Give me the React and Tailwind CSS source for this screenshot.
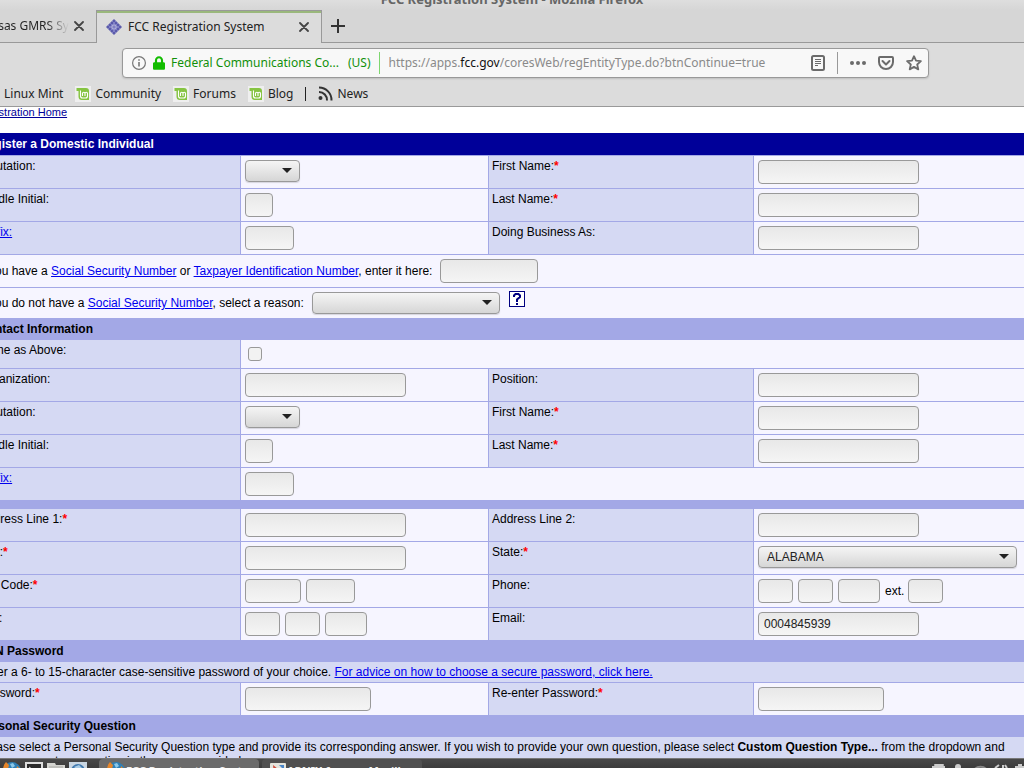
import React, { useState } from "react";
import { FaLock } from "react-icons/fa";

const bookmarks = ["Linux Mint", "Community", "Forums", "Blog"];

const FccIcon = () => (
  <svg width="16" height="16" viewBox="0 0 16 16" aria-hidden="true">
    <path d="M8 0 16 8 8 16 0 8Z" fill="#5b5bab" />
    <path
      d="M4 4l8 8M6 2l8 8M2 6l8 8M12 4l-8 8M10 2 2 10M14 6l-8 8"
      stroke="#9a9ad6"
      strokeWidth="0.6"
    />
    <path d="M8 5.500 10.500 8 8 10.500 5.500 8Z" fill="none" stroke="#dcdcf2" />
  </svg>
);

const MintIcon = () => (
  <svg width="16" height="16" viewBox="0 0 16 16" aria-hidden="true">
    <rect width="16" height="16" fill="#efefef" />
    <path
      d="M1.500 2h9.500a3 3 0 0 1 3 3v9H7a3.500 3.500 0 0 1-3.500-3.500V5h-2Z"
      fill="#86c442"
    />
    <path
      d="M5.500 4.500v5.500a2 2 0 0 0 2 2h3a2 2 0 0 0 2-2V7.500a1.250 1.250 0 0 0-2.500 0V10M10 7.500a1.250 1.250 0 0 0-2.500 0V10"
      fill="none"
      stroke="#fff"
      strokeWidth="1.100"
    />
  </svg>
);

const CloseIcon = () => (
  <svg width="10" height="10" viewBox="0 0 10 10" aria-hidden="true">
    <path d="M1 1l8 8M9 1l-8 8" stroke="#444" strokeWidth="1.800" strokeLinecap="round" />
  </svg>
);

const FirefoxIcon = () => (
  <svg width="18" height="18" viewBox="0 0 18 18" className="shrink-0" aria-hidden="true">
    <circle cx="9" cy="9" r="9" fill="#2f7fb5" />
    <path d="M0 9C0 5 1 2 3 0l3 3-1 4 3 4 5-1 1-6 3 3c1 6-2 11-8 11S0 14 0 9Z" fill="#e5862b" />
    <path d="M7 2l3-1 2 3-3 2Z" fill="#8cc8e8" />
  </svg>
);

const Field = ({ id, label, width, type = "text", defaultValue = "" }) => (
  <input
    id={id}
    type={type}
    aria-label={label}
    defaultValue={defaultValue}
    className={`${width} h-6 shrink-0 rounded border border-[#999] bg-linear-to-b from-[#e8e8e8] to-[#f5f5f5] px-[5px] text-xs text-[#222] outline-none focus:border-[#86be43]`}
  />
);

const Select = ({ id, label, width, options = [""] }) => (
  <span className={`${width} relative inline-flex h-[22px] shrink-0`}>
    <select
      id={id}
      aria-label={label}
      className="w-full appearance-none rounded border border-[#999] bg-linear-to-b from-[#f5f5f5] to-[#d6d6d6] pr-6 pl-2 text-xs text-[#222] shadow-[0_1px_1px_#0002] outline-none"
    >
      {options.map((option) => (
        <option key={option}>{option}</option>
      ))}
    </select>
    <svg
      className="pointer-events-none absolute top-2 right-2"
      width="10"
      height="5"
      viewBox="0 0 10 5"
      aria-hidden="true"
    >
      <path d="M0 0h10L5 5Z" fill="#222" />
    </svg>
  </span>
);

const LabelCell = ({ htmlFor, required, link, children }) => (
  <div className="border-r border-[#a3a8e6] bg-[#d5d9f3] p-[3px] leading-[15px]">
    <label htmlFor={htmlFor}>
      {link ? (
        <a href="#suffix" className="text-[#0000ee] underline">
          {children}
        </a>
      ) : (
        children
      )}
      {required && <b className="text-[#ff0000]">*</b>}
    </label>
  </div>
);

// One form line: a label and its fields, then optionally a second pair
const Row = ({ left, right }) => (
  <div className="grid grid-cols-[265px_248px_265px_1fr] border-b border-[#a3a8e6] bg-[#f6f5ff]">
    <LabelCell htmlFor={left.id} required={left.required} link={left.link}>
      {left.label}
    </LabelCell>
    <div
      className={
        right
          ? "flex items-start gap-[5px] border-r border-[#a3a8e6] p-1"
          : "col-span-3 flex items-start gap-[5px] p-1"
      }
    >
      {left.fields}
    </div>
    {right && (
      <>
        <LabelCell htmlFor={right.id} required={right.required}>
          {right.label}
        </LabelCell>
        <div className="flex items-start gap-[5px] p-1">{right.fields}</div>
      </>
    )}
  </div>
);

const Band = ({ children }) => (
  <h2 className="bg-[#a3a8e6] p-[3px] leading-[15px] font-bold">{children}</h2>
);

const TextLink = ({ href, children }) => (
  <a href={href} className="text-[#0000ee] underline">
    {children}
  </a>
);

const BrowserChrome = () => (
  <header className="shrink-0 bg-[#dcdcdc] font-['Noto_Sans',sans-serif] text-xs text-[#222]">
    {/* Window title */}
    <div className="flex h-[10px] items-end justify-center overflow-hidden bg-linear-to-b from-[#dedede] to-[#d6d6d6] text-[13px] leading-[22px] font-bold whitespace-nowrap text-[#666]">
      FCC Registration System - Mozilla Firefox
    </div>

    {/* Tabs */}
    <div className="flex h-[33px] bg-[#d6d6d6]">
      <div className="flex w-24 shrink-0 items-center justify-end gap-[5px] overflow-hidden border-b border-[#999] pr-3">
        <span className="shrink-0 bg-linear-to-r from-[#222] from-75% to-transparent bg-clip-text whitespace-nowrap text-transparent">
          Kansas GMRS Sy
        </span>
        <button type="button" aria-label="Close tab">
          <CloseIcon />
        </button>
      </div>
      <div className="w-[226px] shrink-0 border-x border-t border-[#999] bg-[#dcdcdc]">
        <div className="flex h-8 items-center border-t-2 border-[#9ab87c] pr-3 pb-0.5 pl-[9px]">
          <FccIcon />
          <span className="ml-1.5 flex-1">FCC Registration System</span>
          <button type="button" aria-label="Close tab">
            <CloseIcon />
          </button>
        </div>
      </div>
      <div className="flex flex-1 items-center border-b border-[#999] pl-[9px]">
        <button type="button" aria-label="New tab">
          <svg width="14" height="14" viewBox="0 0 14 14" aria-hidden="true">
            <path d="M7 0v14M0 7h14" stroke="#333" strokeWidth="2" />
          </svg>
        </button>
      </div>
    </div>

    {/* Address bar */}
    <div className="pt-[5px] pr-[95px] pl-[122px]">
      <div className="flex h-[30px] items-center rounded border border-[#999] bg-[#f8f8f8] pr-1.5 pl-[9px] shadow-[0_1px_2px_#0002]">
        <button type="button" aria-label="Site information">
          <svg width="14" height="14" viewBox="0 0 14 14" fill="none" aria-hidden="true">
            <circle cx="7" cy="7" r="6.400" stroke="#777" strokeWidth="1.200" />
            <path d="M7 6v4.500M7 3.200v1.600" stroke="#777" strokeWidth="1.600" />
          </svg>
        </button>
        <FaLock className="ml-[7px] h-[14px] w-3 text-[#12bc00]" />
        <span className="ml-1.5 shrink-0 whitespace-nowrap text-[#12900a]">
          Federal Communications Co...
        </span>
        <span className="ml-[9px] shrink-0 text-[#12900a]">(US)</span>
        <span className="ml-2 h-[22px] w-px bg-[#7ed66f]" />
        <span className="ml-[9px] flex-1 truncate text-[#8a8a8a]">
          https://apps.<span className="text-[#111]">fcc.gov</span>
          /coresWeb/regEntityType.do?btnContinue=true
        </span>
        <button type="button" aria-label="Reader view">
          <svg width="14" height="16" viewBox="0 0 14 16" fill="none" stroke="#6b6b6b" aria-hidden="true">
            <rect x="1" y="1" width="12" height="14" rx="1.500" strokeWidth="2" />
            <path d="M4 4.500h6M4 6.500h6M4 8.500h6M4 10.500h3" />
          </svg>
        </button>
        <span className="ml-3 h-[22px] w-px bg-[#999]" />
        <button type="button" aria-label="Page actions" className="ml-3">
          <svg width="16" height="16" viewBox="0 0 16 16" fill="#6b6b6b" aria-hidden="true">
            <circle cx="2" cy="8" r="2" />
            <circle cx="8" cy="8" r="2" />
            <circle cx="14" cy="8" r="2" />
          </svg>
        </button>
        <button type="button" aria-label="Save to Pocket" className="ml-3">
          <svg width="16" height="16" viewBox="0 0 16 16" fill="none" stroke="#6b6b6b" strokeWidth="2" aria-hidden="true">
            <path d="M2 2h12a1 1 0 0 1 1 1v4a7 7 0 0 1-14 0V3a1 1 0 0 1 1-1Z" />
            <path d="M4.500 6 8 9.500 11.500 6" strokeLinecap="round" strokeLinejoin="round" />
          </svg>
        </button>
        <button type="button" aria-label="Bookmark this page" className="ml-3">
          <svg width="16" height="16" viewBox="0 0 16 16" fill="none" stroke="#6b6b6b" strokeWidth="1.800" strokeLinejoin="round" aria-hidden="true">
            <path d="M8 1.200l2 4.500 4.900.5-3.700 3.300 1.100 4.900L8 11.900l-4.300 2.500 1.100-4.900L1.100 6.200 6 5.700Z" />
          </svg>
        </button>
      </div>
    </div>

    {/* Bookmarks */}
    <nav className="-ml-4 flex h-[29px] items-center gap-3 border-b border-[#999] pt-[3px]">
      {bookmarks.map((name) => (
        <a key={name} href="#bookmark" className="flex items-center gap-1">
          <MintIcon />
          {name}
        </a>
      ))}
      <span className="h-[14px] w-px bg-[#222]" />
      <a href="#news" className="flex items-center gap-1">
        <svg width="15" height="15" viewBox="0 0 15 15" fill="none" stroke="#333" strokeWidth="2" aria-hidden="true">
          <circle cx="2.500" cy="12" r="2" fill="#333" stroke="none" />
          <path d="M1 6a8 8 0 0 1 8 8.500M1 1.500A12.500 12.500 0 0 1 13.500 14.500" />
        </svg>
        News
      </a>
    </nav>
  </header>
);

const Taskbar = () => (
  <footer className="flex h-[10px] shrink-0 items-start overflow-hidden border-t border-[#777] bg-linear-to-b from-[#484848] to-[#3c3c3c] pl-[3px] font-['Noto_Sans',sans-serif] text-[11px] font-bold text-[#eee]">
    <div className="flex shrink-0 gap-1 pt-[3px]">
      <FirefoxIcon />
      <svg width="18" height="18" viewBox="0 0 18 18" aria-hidden="true">
        <rect x="1" y="1" width="16" height="16" fill="#2a2a2a" stroke="#ddd" strokeWidth="2" />
        <path d="M4 5l3 2-3 2" fill="none" stroke="#ddd" />
      </svg>
      <svg width="18" height="18" viewBox="0 0 18 18" aria-hidden="true">
        <path d="M0 1h8l1 2h9v15H0Z" fill="#d4d4d0" />
        <path d="M2 5h14" stroke="#a8a8a4" />
      </svg>
      <svg width="18" height="18" viewBox="0 0 18 18" aria-hidden="true">
        <rect width="18" height="18" fill="#c9d6e2" />
        <circle cx="9" cy="9" r="7" fill="#3f78ad" />
        <path d="M5 5l5-2 3 3-4 2Z" fill="#a9cbe4" />
      </svg>
    </div>
    <button type="button" className="ml-3 flex h-8 w-40 shrink-0 items-start gap-px overflow-hidden rounded-t bg-[#6b6b6b] pl-2 font-bold whitespace-nowrap">
      <span className="pt-[3px]">
        <FirefoxIcon />
      </span>
      <span className="pt-1">FCC Registration Syst...</span>
    </button>
    <button type="button" className="ml-[3px] flex h-8 w-40 shrink-0 items-start gap-px overflow-hidden rounded-t bg-[#505050] pl-2 font-bold whitespace-nowrap">
      <svg width="16" height="20" viewBox="0 0 16 20" className="shrink-0" aria-hidden="true">
        <rect y="4" width="16" height="16" rx="1" fill="#e4e4dc" />
        <path d="M3 6l5 4-4 5Z" fill="#cf4a3a" />
        <path d="M9 6h5v5Z" fill="#4a86c8" />
      </svg>
      <span className="pt-1">ARNIX forum - Mozilla...</span>
    </button>
    <svg className="mt-[5px] ml-auto shrink-0" width="92" height="14" viewBox="0 0 92 14" fill="#ccc" aria-hidden="true">
      <rect x="2" y="0" width="10" height="2" rx="1" />
      <rect x="0" y="2" width="13" height="2" />
      <circle cx="26" cy="3" r="3" />
      <path d="M42 6a8 8 0 0 1 13 0" fill="none" stroke="#888" strokeWidth="2" />
      <path d="M63 4l4-3M71 4V1M75 4l-2-3" stroke="#ccc" strokeWidth="2" />
      <rect x="86" y="0" width="4" height="3" />
      <rect x="83" y="2" width="9" height="12" />
    </svg>
  </footer>
);

const App = () => {
  const [sameAsAbove, setSameAsAbove] = useState(false);

  return (
    <div className="flex h-screen flex-col overflow-hidden bg-white">
      <BrowserChrome />

      {/* The page is scrolled a little to the right */}
      <main className="min-h-0 flex-1 overflow-hidden font-['Liberation_Sans',Arial,sans-serif] text-xs text-black">
        <form className="-ml-6" onSubmit={(e) => e.preventDefault()}>
          <div className="h-[26px] text-[11px] leading-[10px]">
            <a href="#home" className="text-[#000099] underline">
              Registration Home
            </a>
          </div>

          <h1 className="border-b border-[#a3a8e6] bg-[#000099] px-[3px] leading-[22px] font-bold text-white">
            Register a Domestic Individual
          </h1>
          <Row
            left={{ id: "sal", label: "Salutation:", fields: <Select id="sal" width="w-[55px]" /> }}
            right={{ id: "first", label: "First Name:", required: true, fields: <Field id="first" width="w-[161px]" /> }}
          />
          <Row
            left={{ id: "mi", label: "Middle Initial:", fields: <Field id="mi" width="w-7" /> }}
            right={{ id: "last", label: "Last Name:", required: true, fields: <Field id="last" width="w-[161px]" /> }}
          />
          <Row
            left={{ id: "suffix", label: "Suffix:", link: true, fields: <Field id="suffix" width="w-[49px]" /> }}
            right={{ id: "dba", label: "Doing Business As:", fields: <Field id="dba" width="w-[161px]" /> }}
          />
          <div className="flex items-center gap-2 border-b border-[#a3a8e6] bg-[#f6f5ff] px-[3px] py-1">
            <label htmlFor="ssn">
              If you have a <TextLink href="#ssn">Social Security Number</TextLink> or{" "}
              <TextLink href="#tin">Taxpayer Identification Number</TextLink>, enter it here:
            </label>
            <Field id="ssn" width="w-[98px]" />
          </div>
          <div className="flex h-[31px] items-start gap-2 border-b border-[#a3a8e6] bg-[#f6f5ff] px-[3px] pt-[3px]">
            <label htmlFor="reason" className="leading-6">
              If you do not have a <TextLink href="#ssn">Social Security Number</TextLink>, select a
              reason:
            </label>
            <span className="pt-px">
              <Select id="reason" width="w-[188px]" />
            </span>
            <button
              type="button"
              aria-label="Help"
              className="ml-px flex h-4 w-4 items-center justify-center border border-[#000080] bg-white"
            >
              <svg width="8" height="12" viewBox="0 0 8 12" aria-hidden="true">
                <path
                  d="M1 4V2.500L2.500 1h3L7 2.500V4L4 6.500V9M4 10v2"
                  fill="none"
                  stroke="#000080"
                  strokeWidth="2"
                />
              </svg>
            </button>
          </div>

          <Band>Contact Information</Band>
          <div className="grid grid-cols-[265px_1fr] border-b border-[#a3a8e6] bg-[#f6f5ff]">
            <LabelCell htmlFor="same">Same as Above:</LabelCell>
            <div className="p-[7px]">
              <input
                id="same"
                type="checkbox"
                checked={sameAsAbove}
                onChange={(e) => setSameAsAbove(e.target.checked)}
                className="block h-[14px] w-[14px] appearance-none rounded-[3px] border border-[#999] bg-[#f2f2f2] checked:bg-[#86be43]"
              />
            </div>
          </div>
          <Row
            left={{ id: "org", label: "Organization:", fields: <Field id="org" width="w-[161px]" /> }}
            right={{ id: "position", label: "Position:", fields: <Field id="position" width="w-[161px]" /> }}
          />
          <Row
            left={{ id: "csal", label: "Salutation:", fields: <Select id="csal" width="w-[55px]" /> }}
            right={{ id: "cfirst", label: "First Name:", required: true, fields: <Field id="cfirst" width="w-[161px]" /> }}
          />
          <Row
            left={{ id: "cmi", label: "Middle Initial:", fields: <Field id="cmi" width="w-7" /> }}
            right={{ id: "clast", label: "Last Name:", required: true, fields: <Field id="clast" width="w-[161px]" /> }}
          />
          <Row
            left={{ id: "csuffix", label: "Suffix:", link: true, fields: <Field id="csuffix" width="w-[49px]" /> }}
          />

          <div className="h-2 bg-[#a3a8e6]" />
          <Row
            left={{ id: "addr1", label: "Address Line 1:", required: true, fields: <Field id="addr1" width="w-[161px]" /> }}
            right={{ id: "addr2", label: "Address Line 2:", fields: <Field id="addr2" width="w-[161px]" /> }}
          />
          <Row
            left={{ id: "city", label: "City:", required: true, fields: <Field id="city" width="w-[161px]" /> }}
            right={{
              id: "state",
              label: "State:",
              required: true,
              fields: <Select id="state" width="w-[259px]" options={["ALABAMA", "ALASKA", "ARIZONA", "ARKANSAS"]} />,
            }}
          />
          <Row
            left={{
              id: "zip",
              label: "ZIP Code:",
              required: true,
              fields: (
                <>
                  <Field id="zip" width="w-14" />
                  <Field label="ZIP extension" width="w-[49px]" />
                </>
              ),
            }}
            right={{
              id: "phone",
              label: "Phone:",
              fields: (
                <>
                  <Field id="phone" width="w-[35px]" />
                  <Field label="Phone prefix" width="w-[35px]" />
                  <Field label="Phone number" width="w-[42px]" />
                  <span className="flex gap-1">
                    <label htmlFor="ext" className="leading-6">
                      ext.
                    </label>
                    <Field id="ext" width="w-[35px]" />
                  </span>
                </>
              ),
            }}
          />
          <Row
            left={{
              id: "fax",
              label: "Fax:",
              fields: (
                <>
                  <Field id="fax" width="w-[35px]" />
                  <Field label="Fax prefix" width="w-[35px]" />
                  <Field label="Fax number" width="w-[42px]" />
                </>
              ),
            }}
            right={{ id: "email", label: "Email:", fields: <Field id="email" width="w-[161px]" defaultValue="0004845939" /> }}
          />

          <Band>FRN Password</Band>
          <p className="border-b border-[#a3a8e6] bg-[#d5d9f3] px-[3px] leading-5">
            Enter a 6- to 15-character case-sensitive password of your choice.{" "}
            <TextLink href="#advice">
              For advice on how to choose a secure password, click here.
            </TextLink>
          </p>
          <Row
            left={{ id: "pw", label: "Password:", required: true, fields: <Field id="pw" type="password" width="w-[126px]" /> }}
            right={{ id: "pw2", label: "Re-enter Password:", required: true, fields: <Field id="pw2" type="password" width="w-[126px]" /> }}
          />

          <Band>Personal Security Question</Band>
          <p className="bg-[#d5d9f3] p-[3px] leading-[14px]">
            Please select a Personal Security Question type and provide its corresponding answer. If
            you wish to provide your own question, please select <b>Custom Question Type...</b> from
            the dropdown and enter your custom question in the space provided.
          </p>
        </form>
      </main>

      <Taskbar />
    </div>
  );
};

export default App;
